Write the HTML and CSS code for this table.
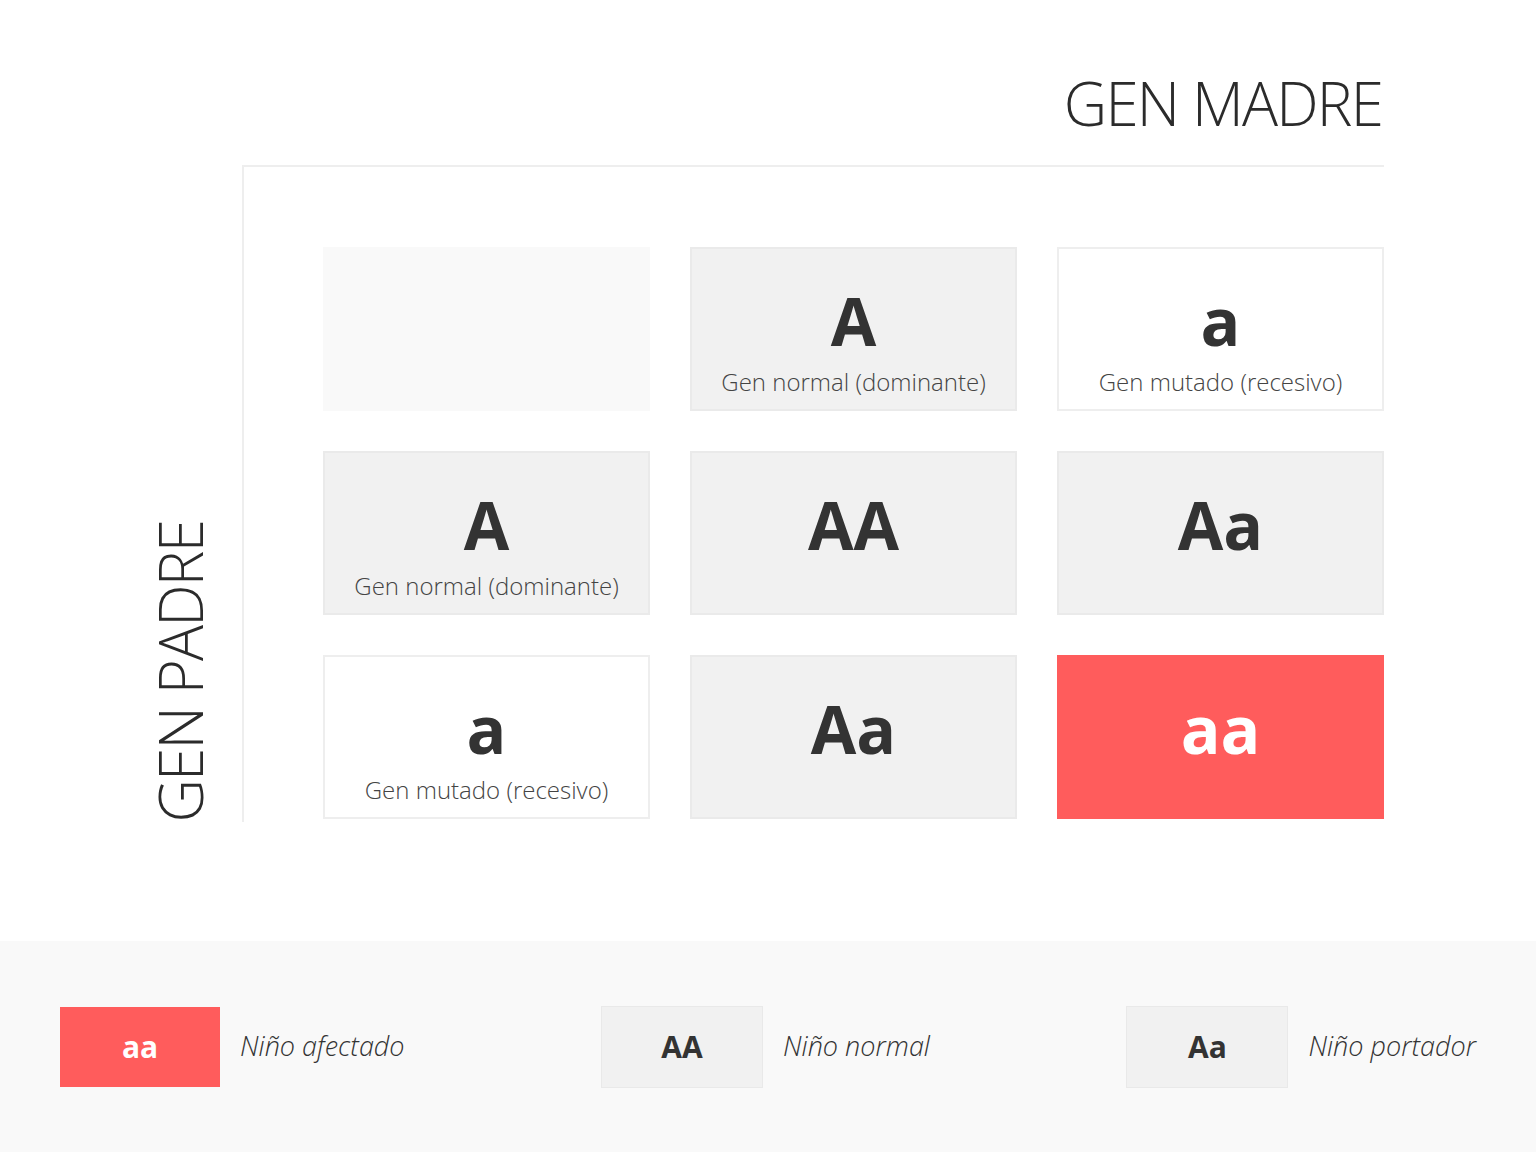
FILE: index.html
```html
<!DOCTYPE html>
<html lang="es">
<head>
<meta charset="utf-8">
<title>Gen madre / Gen padre</title>
<link rel="stylesheet" href="styles.css">
</head>
<body>
<main class="main">
  <div class="head">
    <h1 class="title">GEN MADRE</h1>
  </div>
  <div class="row">
    <div class="side-label">GEN PADRE</div>
    <div class="frame">
      <div class="grid">
        <div class="cell cell-empty"></div>
        <div class="cell cell-grey">
          <div class="big">A</div>
          <div class="label">Gen normal (dominante)</div>
        </div>
        <div class="cell cell-white">
          <div class="big">a</div>
          <div class="label">Gen mutado (recesivo)</div>
        </div>
        <div class="cell cell-grey">
          <div class="big">A</div>
          <div class="label">Gen normal (dominante)</div>
        </div>
        <div class="cell cell-grey">
          <div class="big">AA</div>
        </div>
        <div class="cell cell-grey">
          <div class="big">Aa</div>
        </div>
        <div class="cell cell-white">
          <div class="big">a</div>
          <div class="label">Gen mutado (recesivo)</div>
        </div>
        <div class="cell cell-grey">
          <div class="big">Aa</div>
        </div>
        <div class="cell cell-red">
          <div class="big">aa</div>
        </div>
      </div>
    </div>
  </div>
</main>
<footer class="legend">
  <div class="item">
    <div class="chip chip-red">aa</div>
    <div class="desc">Niño afectado</div>
  </div>
  <div class="item">
    <div class="chip chip-grey">AA</div>
    <div class="desc">Niño normal</div>
  </div>
  <div class="item">
    <div class="chip chip-grey">Aa</div>
    <div class="desc">Niño portador</div>
  </div>
</footer>
</body>
</html>
```

FILE: styles.css
```css
* { box-sizing: border-box; }
html, body { margin: 0; padding: 0; }
body {
  width: 1536px;
  height: 1152px;
  background: #ffffff;
  font-family: "Open Sans", "Liberation Sans", sans-serif;
  color: #333333;
  overflow: hidden;
}
.main {
  height: 941px;
  padding-top: 73px;
}
.head {
  width: 1382px;
  display: flex;
  justify-content: flex-end;
}
.title {
  margin: 0;
  font-size: 60px;
  line-height: 60px;
  font-weight: 300;
  color: #2b2b2b;
  letter-spacing: -1.8px;
}
.row {
  display: flex;
  align-items: flex-end;
  margin-top: 32px;
}
.side-label {
  margin-left: 150px;
  width: 60px;
  writing-mode: vertical-rl;
  transform: rotate(180deg);
  font-size: 60px;
  line-height: 60px;
  font-weight: 300;
  color: #2b2b2b;
  letter-spacing: -1.8px;
  white-space: nowrap;
}
.frame {
  margin-left: 32px;
  width: 1142px;
  border-top: 2px solid #eeeeee;
  border-left: 2px solid #eeeeee;
  padding: 80px 0 3px 79px;
}
.grid {
  display: grid;
  grid-template-columns: repeat(3, 327px);
  grid-auto-rows: 164px;
  column-gap: 40px;
  row-gap: 40px;
}
.cell {
  height: 164px;
  border: 2px solid transparent;
  padding-top: 38px;
  text-align: center;
}
.cell-empty { background: #f9f9f9; border-color: #f9f9f9; }
.cell-grey { background: #f1f1f1; border-color: #eaeaea; }
.cell-white { background: #ffffff; border-color: #eeeeee; }
.cell-red { background: #ff5c5c; border-color: #ff5c5c; color: #ffffff; }
.big {
  font-size: 66px;
  line-height: 66px;
  font-weight: 700;
  color: #333333;
}
.cell-red .big { color: #ffffff; }
.label {
  margin-top: 17px;
  font-size: 24px;
  line-height: 24px;
  font-weight: 300;
  color: #444444;
}
.legend {
  height: 211px;
  background: #f9f9f9;
  padding: 0 60px;
  display: flex;
  justify-content: space-between;
  align-items: center;
}
.item {
  display: flex;
  align-items: center;
}
.chip {
  width: 160px;
  height: 80px;
  display: flex;
  align-items: center;
  justify-content: center;
  font-size: 30px;
  font-weight: 700;
}
.chip-red { background: #ff5c5c; color: #ffffff; }
.chip-grey {
  width: 162px;
  height: 82px;
  background: #f1f1f1;
  border: 1px solid #e9e9e9;
  color: #333333;
}
.desc {
  margin-left: 20px;
  margin-top: -3px;
  font-size: 27px;
  font-style: italic;
  font-weight: 300;
  color: #333333;
}
```
